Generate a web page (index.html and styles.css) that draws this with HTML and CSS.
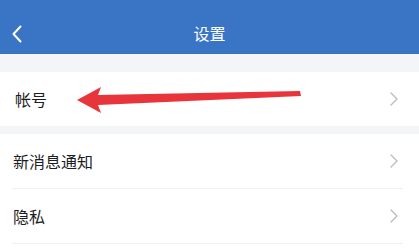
FILE: index.html
```html
<!DOCTYPE html>
<html lang="zh">
<head>
<meta charset="utf-8">
<link rel="stylesheet" href="styles.css">
</head>
<body>
<div class="page">
  <header class="topbar">
    <span class="back">
      <svg width="12" height="18" viewBox="0 0 12 18"><path d="M9.5 1.5 L2.5 9 L9.5 16.5" fill="none" stroke="#fff" stroke-width="2" stroke-linecap="round" stroke-linejoin="round"/></svg>
    </span>
    <h1 class="title">设置</h1>
  </header>
  <div class="gap-top"></div>
  <div class="group">
    <div class="row">
      <span class="label">帐号</span>
      <span class="chev"><svg width="8" height="14" viewBox="0 0 8 14"><path d="M1 1 L7 7 L1 13" fill="none" stroke="#bdbdbd" stroke-width="1.4" stroke-linecap="round" stroke-linejoin="round"/></svg></span>
    </div>
  </div>
  <div class="gap-mid"></div>
  <div class="group fill">
    <div class="row line">
      <span class="label">新消息通知</span>
      <span class="chev"><svg width="8" height="14" viewBox="0 0 8 14"><path d="M1 1 L7 7 L1 13" fill="none" stroke="#bdbdbd" stroke-width="1.4" stroke-linecap="round" stroke-linejoin="round"/></svg></span>
    </div>
    <div class="row line">
      <span class="label">隐私</span>
      <span class="chev"><svg width="8" height="14" viewBox="0 0 8 14"><path d="M1 1 L7 7 L1 13" fill="none" stroke="#bdbdbd" stroke-width="1.4" stroke-linecap="round" stroke-linejoin="round"/></svg></span>
    </div>
  </div>
  <svg class="arrow" width="419" height="248" viewBox="0 0 419 248">
    <polygon points="77,100 101,87 98,95 300,91 301,96 98,105 101,113" fill="#e8343b"/>
  </svg>
</div>
</body>
</html>
```

FILE: styles.css
```css
* { box-sizing: border-box; margin: 0; padding: 0; }
html, body { width: 419px; height: 248px; overflow: hidden; }
body {
  background: #f4f5f7;
  font-family: "Noto Sans CJK SC", "Noto Sans", sans-serif;
}
.page {
  position: relative;
  width: 419px;
  height: 248px;
  display: flex;
  flex-direction: column;
}
.topbar {
  height: 54px;
  flex: none;
  background: #3a75c5;
  display: flex;
  align-items: center;
  justify-content: center;
  position: relative;
}
.back {
  position: absolute;
  left: 11px;
  top: 25px;
  display: flex;
}
.title {
  color: #fff;
  font-size: 16px;
  font-weight: 400;
  line-height: 1;
  margin-top: 11px;
}
.gap-top { height: 18px; flex: none; }
.gap-mid { height: 8px; flex: none; }
.group { background: #fff; flex: none; }
.group.fill { flex: 1; }
.row {
  height: 54px;
  display: flex;
  align-items: center;
  justify-content: space-between;
  padding: 0 21px 0 15px;
}
.group .row.line {
  height: 55px;
  border-bottom: 1px solid #f0f0f0;
  margin: 0 16px 0 12px;
  padding: 0 5px 0 1px;
}
.label {
  font-size: 16px;
  color: #1e1e1e;
  line-height: 1;
}
.chev { display: flex; }
.arrow {
  position: absolute;
  left: 0;
  top: 0;
  pointer-events: none;
}
```
